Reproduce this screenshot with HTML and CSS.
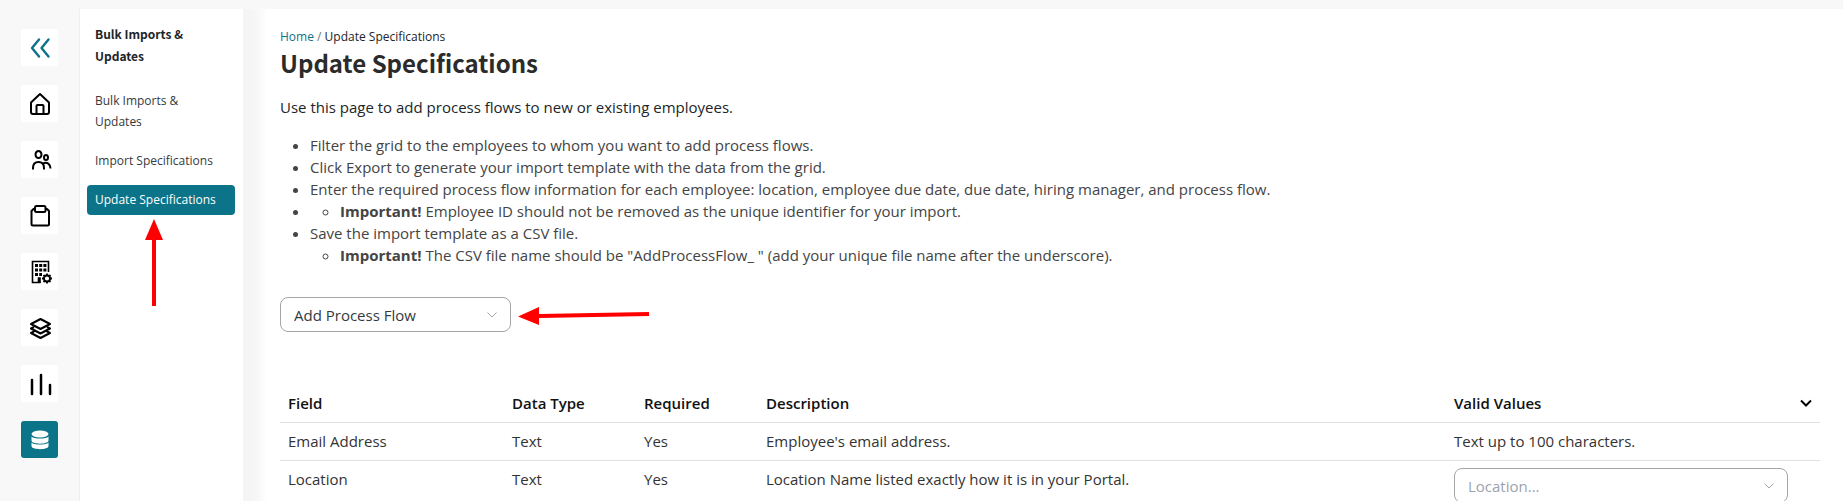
FILE: index.html
```html
<!DOCTYPE html>
<html lang="en">
<head>
    <meta charset="UTF-8">
    <meta name="viewport" content="width=device-width, initial-scale=1.0">
    <title>Update Specifications</title>
    <link rel="stylesheet" href="styles.css">
</head>
<body>
    <div class="app">
        <nav class="rail" aria-label="Main">
            <button type="button" class="rail-item collapse" aria-label="Collapse menu">
                <svg viewBox="0 0 24 24" fill="none" stroke="currentColor" stroke-width="2.400" stroke-linecap="round" stroke-linejoin="round"><path d="M11 3.500L4 12l7 8.500M20.500 3.500l-7 8.500 7 8.500"/></svg>
            </button>
            <a href="#" class="rail-item" aria-label="Home">
                <svg viewBox="0 0 24 24" fill="none" stroke="currentColor" stroke-width="2" stroke-linejoin="round"><path d="M3 10.500l9-8.500 9 8.500v9.500a2 2 0 0 1-2 2H5a2 2 0 0 1-2-2z"/><path d="M8.500 22v-8a1 1 0 0 1 1-1h5a1 1 0 0 1 1 1V22"/></svg>
            </a>
            <a href="#" class="rail-item" aria-label="People">
                <svg viewBox="0 0 24 24" fill="none" stroke="currentColor" stroke-width="2"><ellipse cx="10.500" cy="6.500" rx="3" ry="3.500"/><ellipse cx="18" cy="9.500" rx="2" ry="2.500"/><path d="M5 21.500v-1.500c0-4 2.500-6 5.500-6s5.500 2 5.500 6v1.500M15 15.500c4-2 7.500.5 7.500 5"/></svg>
            </a>
            <a href="#" class="rail-item" aria-label="Tasks">
                <svg viewBox="0 0 24 24" fill="none" stroke="currentColor" stroke-width="2" stroke-linejoin="round"><rect x="7" y="2" width="10.500" height="6" rx="1.500"/><path d="M7 5H5.500L3.500 7v13a1.500 1.500 0 0 0 1.500 1.500h14.500A1.500 1.500 0 0 0 21 20V7l-2-2h-1.500"/></svg>
            </a>
            <a href="#" class="rail-item" aria-label="Company settings">
                <svg viewBox="0 0 24 24" fill="none" stroke="currentColor" stroke-width="1.600"><path d="M20.500 12V1.500H4.500v21h8"/><path d="M10.500 23v-5h1.500v5" fill="currentColor"/><path d="M7 5.500h11.500M7 10h11.500M7 14.500h7" stroke-width="2.800" stroke-dasharray="3 1.200"/><circle cx="19" cy="18.500" r="3" stroke-width="1.800"/><path stroke-width="1.800" d="M19 15.500v-2M19 21.500v2M16 18.500h-2M22 18.500h2M16.900 16.400l-1.400-1.400M21.100 16.400l1.400-1.400M16.900 20.600l-1.400 1.400M21.100 20.600l1.400 1.400"/></svg>
            </a>
            <a href="#" class="rail-item" aria-label="Layers">
                <svg viewBox="0 0 24 24" fill="none" stroke="currentColor" stroke-width="2" stroke-linejoin="round"><path d="M12.500 3l9.500 5-9.500 5-9.500-5z"/><path d="M6 11l-3 1.500 9.500 5 9.500-5-3-1.500M6 15.500l-3 1.500 9.500 5 9.500-5-3-1.500"/></svg>
            </a>
            <a href="#" class="rail-item" aria-label="Reports">
                <svg viewBox="0 0 24 24" fill="none" stroke="currentColor" stroke-width="2.500" stroke-linecap="round"><path d="M4 8v14M13 3v19M22 13v9"/></svg>
            </a>
            <a href="#" class="rail-item active" aria-label="Imports">
                <svg viewBox="0 0 24 24" fill="currentColor"><ellipse cx="12" cy="6" rx="8.500" ry="3.500"/><path d="M3.500 8.500c2 2.800 15 2.800 17 0v4c0 4.200-17 4.200-17 0z"/><path d="M3.500 14.500c2 2.800 15 2.800 17 0v3.500c0 4.200-17 4.200-17 0z"/></svg>
            </a>
        </nav>

        <nav class="subnav" aria-label="Bulk Imports &amp; Updates">
            <h2>Bulk Imports &amp;<br>Updates</h2>
            <a href="#">Bulk Imports &amp;<br>Updates</a>
            <a href="#">Import Specifications</a>
            <a href="#" class="active">Update Specifications</a>
            <svg class="arrow-up" viewBox="0 0 18 87" fill="red"><path d="M9 0l9 21h-7v66H7V21H0z"/></svg>
        </nav>

        <main class="content">
            <div class="breadcrumb"><a href="#">Home</a> <span>/</span> Update Specifications</div>
            <h1>Update Specifications</h1>
            <p class="intro">Use this page to add process flows to new or existing employees.</p>
            <ul class="steps">
                <li>Filter the grid to the employees to whom you want to add process flows.</li>
                <li>Click Export to generate your import template with the data from the grid.</li>
                <li>Enter the required process flow information for each employee: location, employee due date, due date, hiring manager, and process flow.</li>
                <li>
                    <ul>
                        <li><strong>Important!</strong> Employee ID should not be removed as the unique identifier for your import.</li>
                    </ul>
                </li>
                <li>Save the import template as a CSV file.
                    <ul>
                        <li><strong>Important!</strong> The CSV file name should be "AddProcessFlow_ " (add your unique file name after the underscore).</li>
                    </ul>
                </li>
            </ul>

            <div class="select-box process">
                <select aria-label="Specification">
                    <option>Add Process Flow</option>
                </select>
                <svg class="caret" viewBox="0 0 12 8" fill="none" stroke="currentColor"><path d="M1.500 1.500L6 6l4.500-4.500"/></svg>
                <svg class="arrow-left" viewBox="0 0 132 18" fill="red"><path d="M0 9.500L21 0v7l110-2v4l-110 2v7z"/></svg>
            </div>

            <table>
                <thead>
                    <tr>
                        <th class="col-field">Field</th>
                        <th class="col-type">Data Type</th>
                        <th class="col-required">Required</th>
                        <th>Description</th>
                        <th class="col-values">
                            <div class="values-head">
                                Valid Values
                                <button type="button" class="toggle" aria-label="Collapse table">
                                    <svg viewBox="0 0 12 8" fill="none" stroke="currentColor" stroke-width="2"><path d="M1 1.500l5 5 5-5"/></svg>
                                </button>
                            </div>
                        </th>
                    </tr>
                </thead>
                <tbody>
                    <tr>
                        <td>Email Address</td>
                        <td>Text</td>
                        <td>Yes</td>
                        <td>Employee's email address.</td>
                        <td>Text up to 100 characters.</td>
                    </tr>
                    <tr>
                        <td>Location</td>
                        <td>Text</td>
                        <td>Yes</td>
                        <td>Location Name listed exactly how it is in your Portal.</td>
                        <td>
                            <div class="select-box location">
                                <select aria-label="Location">
                                    <option>Location...</option>
                                </select>
                                <svg class="caret" viewBox="0 0 12 8" fill="none" stroke="currentColor"><path d="M1.500 1.500L6 6l4.500-4.500"/></svg>
                            </div>
                        </td>
                    </tr>
                </tbody>
            </table>
        </main>
    </div>
</body>
</html>
```
FILE: styles.css
```css
* {
    box-sizing: border-box;
}
body {
    margin: 0;
    font-family: "Open Sans", sans-serif;
    font-size: 15px;
    line-height: 22px;
    color: #212529;
    background-color: #f8f8f8;
}
a {
    color: #0c7489;
    text-decoration: none;
}
.app {
    display: flex;
    height: 100vh;
    padding-top: 9px;
}

/* Icon rail */
.rail {
    display: flex;
    flex-direction: column;
    gap: 19px;
    flex: none;
    width: 80px;
    padding: 20px 21px;
    border-right: 1px solid #eee;
}
.rail-item {
    display: flex;
    align-items: center;
    justify-content: center;
    flex: none;
    width: 37px;
    height: 37px;
    padding: 0;
    border: none;
    border-radius: 3px;
    background-color: #fff;
    color: #000;
}
.rail-item svg {
    width: 24px;
    height: 24px;
}
.rail-item.collapse {
    color: #0c7489;
    cursor: pointer;
}
.rail-item.active {
    background-color: #0c7489;
    color: #fff;
}

/* Section menu */
.subnav {
    flex: none;
    width: 163px;
    padding: 14px 8px 14px 7px;
    background-color: #fff;
}
.subnav h2 {
    margin: 0 0 19px;
    padding: 0 8px;
    font-family: "Noto Sans CJK SC", "Open Sans", sans-serif;
    font-size: 12px;
    line-height: 22px;
}
.subnav a {
    display: block;
    margin-bottom: 9px;
    padding: 4px 8px 5px;
    border-radius: 4px;
    font-size: 12px;
    line-height: 21px;
    color: #343a40;
}
.subnav a.active {
    margin-bottom: 0;
    background-color: #0c7489;
    color: #fff;
}
.arrow-up {
    display: block;
    width: 18px;
    height: 87px;
    margin: 4px auto 0 58px;
}

/* Page content */
.content {
    flex: 1;
    min-width: 0;
    padding: 17px 23px 17px 37px;
    background: linear-gradient(to right, #f4f4f4 0, #f6f6f6 12px, #fff 24px);
    overflow-y: auto;
    scrollbar-width: none;
}
.breadcrumb {
    font-size: 12px;
}
.breadcrumb span {
    color: #6c757d;
}
h1 {
    margin: 0 0 18px;
    font-family: "Noto Sans CJK SC", "Open Sans", sans-serif;
    font-size: 24px;
    line-height: 30px;
    color: #2b2b2b;
}
.intro {
    margin: 0 0 16px;
}
.steps {
    margin: 0 0 31px;
    padding-left: 30px;
    color: #444;
}
.steps ul {
    padding-left: 30px;
}

/* Drop-downs */
.select-box {
    position: relative;
    color: #343a40;
}
.select-box select {
    display: block;
    width: 100%;
    height: 35px;
    padding: 0 36px 0 13px;
    border: 1px solid #a5a5a5;
    border-radius: 8px;
    background-color: #fff;
    color: inherit;
    font: inherit;
    appearance: none;
}
.caret {
    position: absolute;
    top: 14px;
    right: 13px;
    width: 12px;
    height: 8px;
    color: #a5a5a5;
    pointer-events: none;
}
.process {
    width: 231px;
    margin-bottom: 52px;
}
.location {
    width: 334px;
    color: #9ca3af;
}
.arrow-left {
    position: absolute;
    top: 10px;
    left: 100%;
    width: 132px;
    height: 18px;
    margin-left: 7px;
}

/* Field table */
table {
    width: 100%;
    table-layout: fixed;
    border-collapse: collapse;
}
th, td {
    padding: 8px;
    text-align: left;
    vertical-align: top;
    border-bottom: 1px solid #dee2e6;
}
th {
    font-weight: 600;
    color: #111;
}
td {
    padding-top: 7px;
    color: #333;
}
.col-field {
    width: 224px;
}
.col-type {
    width: 132px;
}
.col-required {
    width: 122px;
}
.col-values {
    width: 374px;
}
.values-head {
    display: flex;
    align-items: center;
    justify-content: space-between;
}
.toggle {
    display: flex;
    padding: 0;
    border: none;
    background: none;
    color: #000;
    cursor: pointer;
}
.toggle svg {
    width: 12px;
    height: 8px;
}
```
